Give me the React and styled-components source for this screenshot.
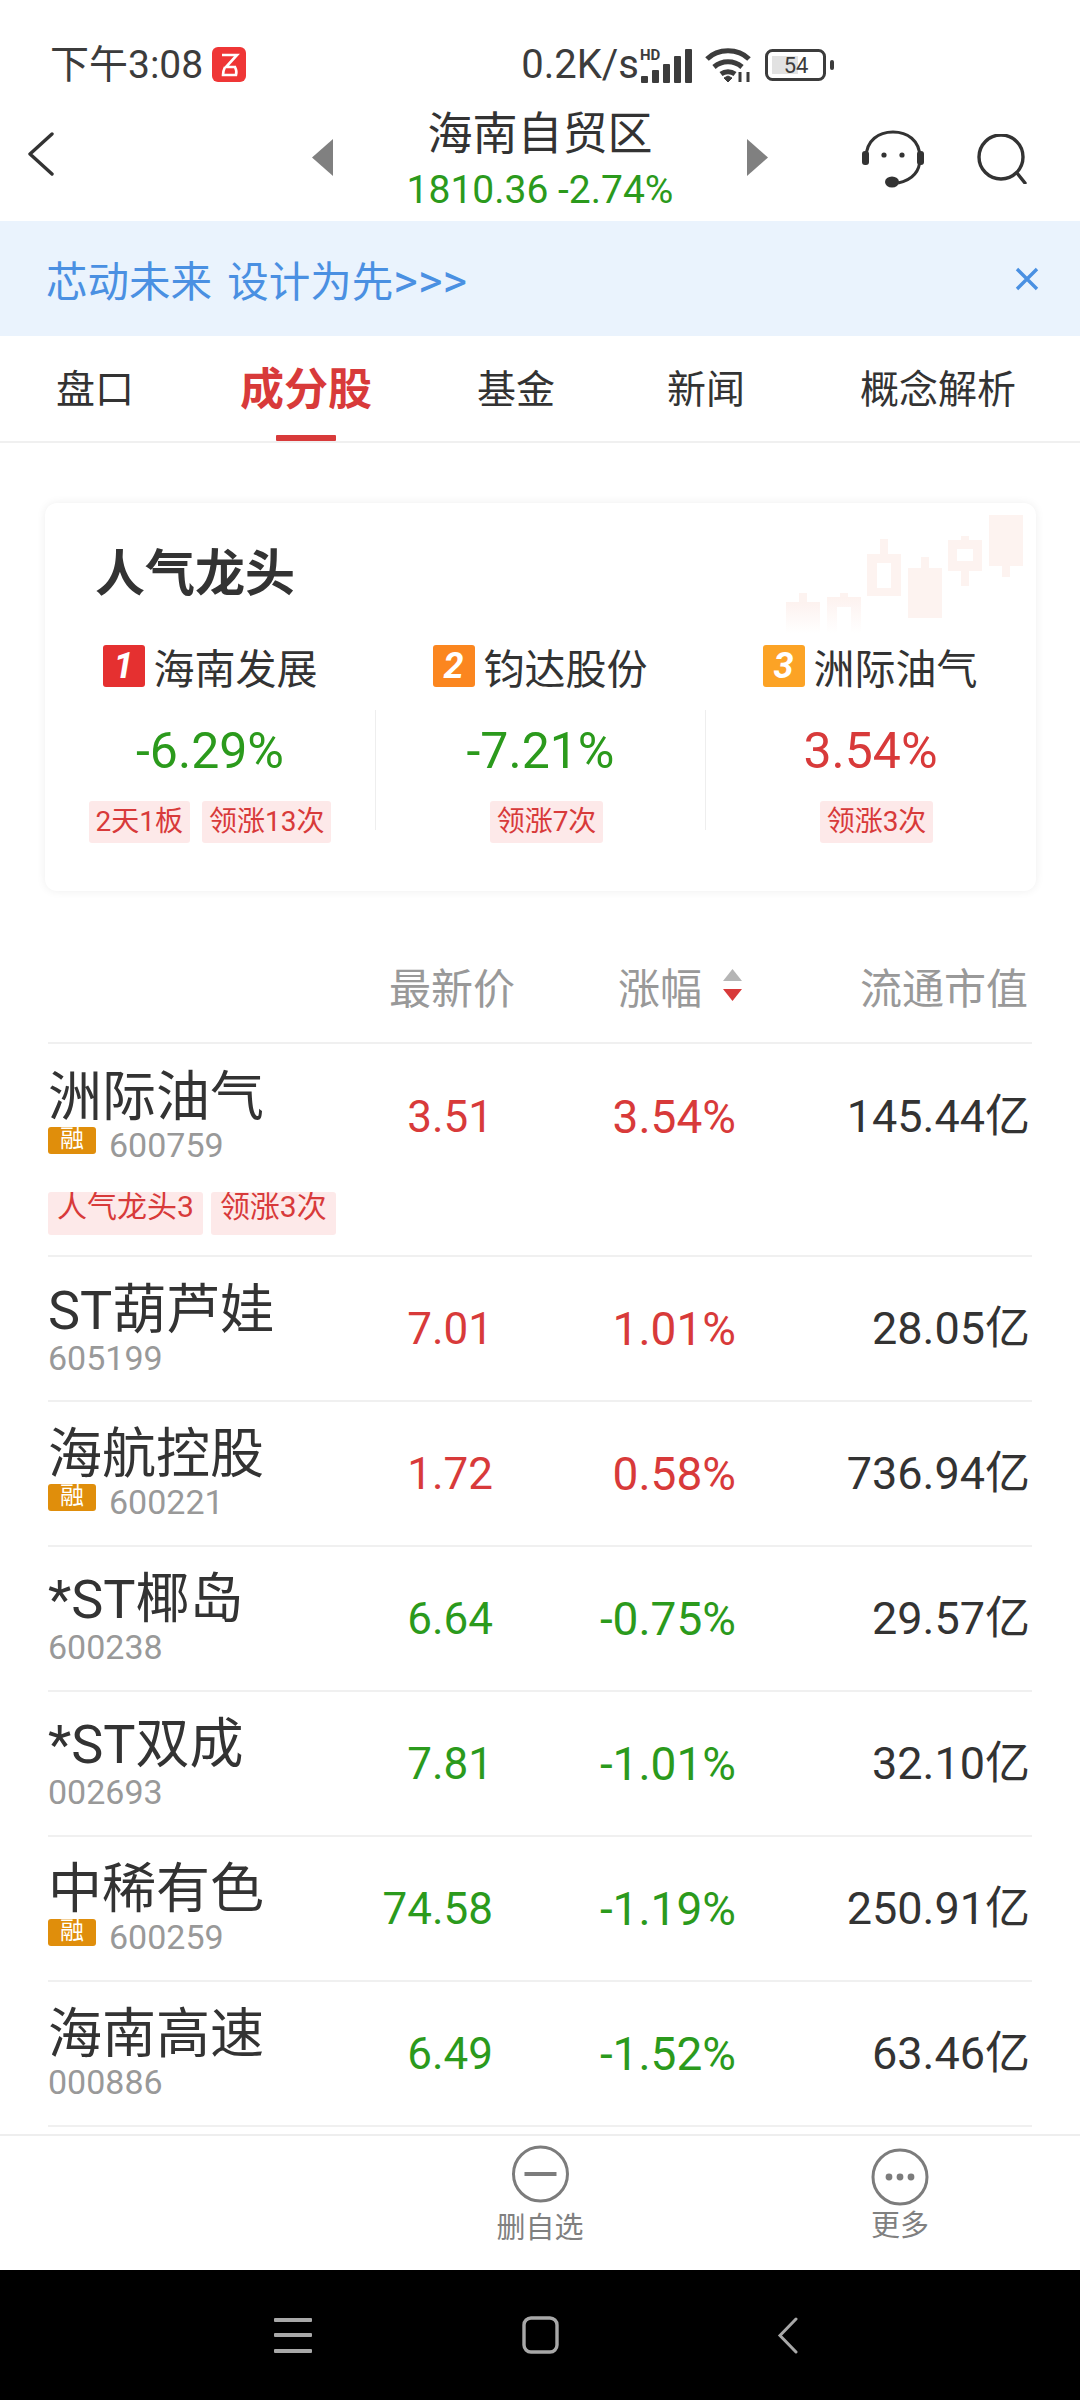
import React from "react";
import styled, { createGlobalStyle } from "styled-components";

const GREEN = "#2b9a1c";
const RED = "#d83a3a";
const FONT = `Roboto, "Noto Sans CJK SC", sans-serif`;

const Global = createGlobalStyle`
  html, body { margin: 0; padding: 0; background: #fff; }
  * { box-sizing: border-box; }
`;

const Screen = styled.div`
  width: 1080px;
  height: 2400px;
  display: flex;
  flex-direction: column;
  overflow: hidden;
  background: #fff;
  color: #333;
  font-family: ${FONT};
`;

/* status bar */
const StatusBar = styled.div`
  height: 96px;
  padding: 33px 245px 0 50px;
  display: flex;
  align-items: center;
  justify-content: space-between;
  flex: none;
`;
const StatusGroup = styled.div`
  display: flex;
  align-items: center;
  gap: ${(p) => p.$gap || 0}px;
  margin-left: ${(p) => p.$left || 0}px;
`;
const StatusText = styled.span`
  font-size: ${(p) => p.$size || 39}px;
  line-height: 44px;
  color: #3c3c3c;
  white-space: nowrap;
`;

/* title bar */
const TitleBar = styled.div`
  height: 125px;
  flex: none;
  display: grid;
  grid-template-columns: 312px 456px 1fr;
  align-items: center;
`;
const BackCell = styled.div`
  padding-left: 27px;
  padding-bottom: 10px;
  display: flex;
`;
const TitleCell = styled.div`
  display: flex;
  align-items: center;
  justify-content: space-between;
`;
const TitleStack = styled.div`
  display: flex;
  flex-direction: column;
  align-items: center;
  margin-top: 3px;
`;
const TitleText = styled.div`
  font-size: 45px;
  line-height: 56px;
  color: #333;
`;
const TitleSub = styled.div`
  font-size: 39px;
  line-height: 46px;
  margin-top: 4px;
  color: ${GREEN};
  white-space: nowrap;
`;
const ActionCell = styled.div`
  display: flex;
  align-items: center;
  padding: 0 0 0 94px;
  gap: 52px;
`;

/* banner */
const Banner = styled.div`
  height: 115px;
  flex: none;
  background: #eaf3fd;
  padding: 0 41px 0 46px;
  display: flex;
  align-items: center;
  justify-content: space-between;
`;
const BannerText = styled.div`
  font-size: 41.5px;
  word-spacing: 5px;
  color: #4a90e2;
  white-space: pre;
`;
const BannerArrows = styled.span`
  font-size: 47px;
`;

/* tabs */
const Tabs = styled.div`
  height: 107px;
  flex: none;
  position: relative;
  display: flex;
  border-bottom: 2px solid #f0f0f0;
`;
const Tab = styled.div`
  position: absolute;
  left: ${(p) => p.$center}px;
  top: 0;
  height: 105px;
  transform: translateX(-50%);
  display: flex;
  align-items: center;
  font-size: ${(p) => (p.$active ? 44 : 39)}px;
  font-weight: ${(p) => (p.$active ? 700 : 400)};
  color: ${(p) => (p.$active ? RED : "#333")};
  white-space: nowrap;
  padding-bottom: 6px;
`;
const TabMark = styled.div`
  position: absolute;
  left: 276px;
  width: 60px;
  bottom: 0;
  height: 6px;
  background: ${RED};
  border-radius: 1px;
`;

/* leader card */
const Card = styled.div`
  position: relative;
  flex: none;
  margin: 60px 44px 0 45px;
  height: 388px;
  border-radius: 12px;
  background: #fff;
  box-shadow: 0 0 10px rgba(0, 0, 0, 0.07);
  overflow: hidden;
`;
const CardTitle = styled.div`
  padding: 40px 0 0 50px;
  height: 138px;
  font-size: 50px;
  line-height: 62px;
  font-weight: 700;
  color: #333;
`;
const LeaderGrid = styled.div`
  display: grid;
  grid-template-columns: repeat(3, 330px);
`;
const Leader = styled.div`
  display: flex;
  flex-direction: column;
  align-items: center;
`;
const LeaderName = styled.div`
  height: 50px;
  display: flex;
  align-items: center;
  gap: 9px;
  font-size: 41px;
  color: #333;
`;
const RankBadge = styled.span`
  width: 42px;
  height: 42px;
  border-radius: 3px;
  background: ${(p) => p.$bg};
  color: #fff;
  font: italic 700 36px/42px Roboto, sans-serif;
  text-align: center;
`;
const LeaderBody = styled.div`
  align-self: stretch;
  height: 120px;
  margin-top: 19px;
  display: flex;
  flex-direction: column;
  align-items: center;
  border-left: ${(p) => (p.$divided ? "1px solid #eeeeee" : "none")};
`;
const LeaderPct = styled.div`
  font-size: 50px;
  line-height: 60px;
  margin-top: 11px;
  color: ${(p) => p.$color};
`;
const TagRow = styled.div`
  display: flex;
  width: max-content;
  gap: ${(p) => p.$gap || 12}px;
  margin-top: ${(p) => p.$top || 0}px;
  padding-left: ${(p) => p.$shift || 0}px;
`;
const Tag = styled.div`
  flex: none;
  height: ${(p) => p.$h || 42}px;
  padding: 0 ${(p) => p.$pad || 7}px;
  border-radius: 3px;
  background: #fde9e9;
  color: ${RED};
  font-size: ${(p) => p.$size || 28}px;
  line-height: ${(p) => p.$line || 42}px;
  white-space: nowrap;
  overflow: hidden;
`;
const CandleArt = styled.svg`
  position: absolute;
  right: 0;
  top: 0;
  pointer-events: none;
`;

/* stock table */
const Table = styled.div`
  flex: 1;
  min-height: 0;
  margin: 0 48px;
`;
const TableHead = styled.div`
  display: grid;
  grid-template-columns: 467px 227px 286px;
  height: 153px;
  padding-top: 66px;
  font-size: 42px;
  color: #999;
  border-bottom: 2px solid #f0f0f0;
`;
const HeadCell = styled.div`
  display: flex;
  align-items: center;
  justify-content: flex-end;
  gap: ${(p) => p.$gap || 0}px;
  height: 56px;
  white-space: nowrap;
`;
const Row = styled.div`
  display: grid;
  grid-template-columns: 250px 195px 243px 294px;
  height: ${(p) => p.$h}px;
  align-items: start;
  border-bottom: 2px solid #f0f0f0;
`;
const NameCell = styled.div`
  display: flex;
  flex-direction: column;
`;
const StockName = styled.div`
  font-size: 54px;
  line-height: 62px;
  margin-top: ${(p) => p.$top}px;
  color: #333;
  white-space: nowrap;
`;
const CodeLine = styled.div`
  display: flex;
  align-items: center;
  gap: 13px;
  height: 40px;
  margin-top: -4px;
`;
const MarginBadge = styled.span`
  width: 48px;
  height: 27px;
  margin-top: -10px;
  border-radius: 3px;
  background: #e08e0b;
  color: #fff;
  font-size: 24px;
  line-height: 24px;
  text-align: center;
  overflow: hidden;
`;
const Code = styled.span`
  font-size: 34px;
  line-height: 40px;
  color: #999;
`;
const Num = styled.div`
  font-size: ${(p) => p.$size}px;
  line-height: 60px;
  margin-top: ${(p) => p.$top}px;
  text-align: right;
  color: ${(p) => p.$color};
  white-space: nowrap;
`;

/* action footer */
const Footer = styled.div`
  height: 136px;
  flex: none;
  border-top: 2px solid #eeeeee;
  position: relative;
  display: flex;
`;
const FooterAction = styled.div`
  position: absolute;
  left: ${(p) => p.$center}px;
  top: ${(p) => p.$top}px;
  transform: translateX(-50%);
  display: flex;
  flex-direction: column;
  align-items: center;
`;
const FooterLabel = styled.div`
  font-size: 29px;
  line-height: 36px;
  margin-top: ${(p) => p.$top}px;
  color: #808080;
  white-space: nowrap;
`;

/* system navigation */
const NavBar = styled.div`
  height: 130px;
  flex: none;
  background: #000;
  position: relative;
`;
const NavIcon = styled.svg`
  position: absolute;
  left: ${(p) => p.$x}px;
  top: ${(p) => p.$y}px;
`;
const NudgedIcon = styled.svg`
  margin-bottom: ${(p) => p.$lift || 0}px;
  flex: none;
`;

const AppBadge = () => (
  <svg width="34" height="35" viewBox="0 0 34 35">
    <rect width="34" height="35" rx="6" fill="#ef3636" />
    <path d="M10 8h15l-11 12h10M13 20c-2 4-2 7-2 8h13c1-3 0-6-1-8" fill="none" stroke="#fff" strokeWidth="2.6" />
  </svg>
);

const Signal = () => (
  <svg width="54" height="36" viewBox="0 0 54 36">
    <text x="1" y="13" fontFamily="Roboto, sans-serif" fontWeight="700" fontSize="15" fill="#3c3c3c">HD</text>
    <rect x="2" y="29" width="7" height="7" rx="1" fill="#3c3c3c" />
    <rect x="13" y="23" width="7" height="13" rx="1" fill="#3c3c3c" />
    <rect x="24" y="17" width="7" height="19" rx="1" fill="#3c3c3c" />
    <rect x="35" y="9" width="7" height="27" rx="1" fill="#3c3c3c" />
    <rect x="46" y="2" width="7" height="34" rx="1" fill="#3c3c3c" />
  </svg>
);

const Wifi = () => (
  <svg width="48" height="36" viewBox="0 0 48 36" fill="none" stroke="#3c3c3c" strokeWidth="5">
    <path d="M2 12C13 1 33 1 44 12" />
    <path d="M9 20c8-7 20-7 28 0" />
    <path d="M16 27c4-3 10-3 14 0" />
    <path d="M19 31l4 4 4-4-4-2z" fill="#3c3c3c" strokeWidth="1" />
    <path d="M35 25v10M43 25v10" strokeWidth="3" />
  </svg>
);

const Battery = () => (
  <svg width="70" height="32" viewBox="0 0 70 32">
    <rect x="1.5" y="1.5" width="58" height="29" rx="6" fill="none" stroke="#3c3c3c" strokeWidth="3" />
    <rect x="7" y="7" width="26" height="18" fill="#e2e2e2" />
    <rect x="65" y="11" width="4" height="10" rx="2" fill="#3c3c3c" />
    <text x="31" y="24" textAnchor="middle" fontFamily="Roboto, sans-serif" fontSize="22" fill="#3c3c3c">54</text>
  </svg>
);

const Chevron = () => (
  <svg width="28" height="44" viewBox="0 0 28 44" fill="none" stroke="#333" strokeWidth="3.4" strokeLinecap="round" strokeLinejoin="round">
    <path d="M25 2L3 22l22 20" />
  </svg>
);

const Triangle = ({ flip }) => (
  <NudgedIcon $lift={2} width="21" height="37" viewBox="0 0 21 37">
    <path d={flip ? "M0 0l21 18.5L0 37z" : "M21 0L0 18.5 21 37z"} fill="#808080" />
  </NudgedIcon>
);

const Headset = () => (
  <svg width="62" height="58" viewBox="0 0 62 58" fill="none" stroke="#333" strokeWidth="3">
    <path d="M4 28C4 10 17 2 31 2s27 8 27 26c0 14-8 22-22 25" />
    <rect x="0" y="21" width="7" height="14" rx="3" fill="#333" stroke="none" />
    <rect x="55" y="21" width="7" height="14" rx="3" fill="#333" stroke="none" />
    <circle cx="22" cy="25" r="2.6" fill="#333" stroke="none" />
    <circle cx="40" cy="25" r="2.6" fill="#333" stroke="none" />
    <ellipse cx="30" cy="52" rx="7" ry="5.5" fill="#333" stroke="none" />
  </svg>
);

const Search = () => (
  <svg width="52" height="50" viewBox="0 0 52 50" fill="none" stroke="#333" strokeWidth="3.4" strokeLinecap="round">
    <circle cx="25" cy="23" r="22" />
    <path d="M41 39l8 10" />
  </svg>
);

const Close = () => (
  <svg width="24" height="24" viewBox="0 0 24 24" stroke="#4a90e2" strokeWidth="3.4">
    <path d="M2 2l20 20M22 2L2 22" />
  </svg>
);

const SortArrows = () => (
  <svg width="19" height="32" viewBox="0 0 19 32">
    <path d="M9.5 0L19 12H0z" fill="#b5b5b5" />
    <path d="M0 20h19L9.5 32z" fill={RED} />
  </svg>
);

const CircleMinus = () => (
  <svg width="58" height="58" viewBox="0 0 58 58" fill="none" stroke="#7c7c7c" strokeWidth="3">
    <circle cx="29" cy="29" r="27" />
    <path d="M13 29h32" strokeWidth="4" />
  </svg>
);

const CircleMore = () => (
  <svg width="58" height="58" viewBox="0 0 58 58" fill="none" stroke="#7c7c7c" strokeWidth="3">
    <circle cx="29" cy="29" r="27" />
    <circle cx="18" cy="29" r="3.4" fill="#7c7c7c" stroke="none" />
    <circle cx="29" cy="29" r="3.4" fill="#7c7c7c" stroke="none" />
    <circle cx="40" cy="29" r="3.4" fill="#7c7c7c" stroke="none" />
  </svg>
);

// Faded candlestick decoration in the card's upper right corner
const Candles = () => (
  <CandleArt width="260" height="130" viewBox="775 502 260 130">
    <defs>
      <linearGradient id="fade" x1="0" y1="0" x2="0" y2="1">
        <stop offset="0" stopColor="#fdf2ef" />
        <stop offset="1" stopColor="#fff" />
      </linearGradient>
    </defs>
    <g fill="#fdf3f0">
      <rect x="988" y="514" width="34" height="51" />
      <rect x="1001" y="565" width="8" height="11" />
      <path fillRule="evenodd" d="M947 539h34v31h-34zM956 548v12h16v-12z" />
      <rect x="960" y="535" width="8" height="4" />
      <rect x="960" y="570" width="8" height="15" />
      <rect x="907" y="567" width="34" height="50" />
      <rect x="920" y="556" width="8" height="11" />
      <path fillRule="evenodd" d="M866 553h34v42h-34zM876 562v25h14v-25z" />
      <rect x="879" y="538" width="8" height="15" />
      <rect x="839" y="592" width="8" height="10" />
      <rect x="798" y="592" width="8" height="10" />
    </g>
    <path fillRule="evenodd" d="M826 596h34v36h-34zM836 606v26h14v-26z" fill="url(#fade)" />
    <rect x="785" y="601" width="34" height="31" fill="url(#fade)" />
  </CandleArt>
);

const leaders = [
  { rank: 1, bg: "#e53030", name: "海南发展", pct: "-6.29%", color: GREEN, tags: ["2天1板", "领涨13次"] },
  { rank: 2, bg: "#fb861f", name: "钧达股份", pct: "-7.21%", color: GREEN, tags: ["领涨7次"], shift: 12, divided: true },
  { rank: 3, bg: "#fca325", name: "洲际油气", pct: "3.54%", color: RED, tags: ["领涨3次"], shift: 12, divided: true },
];

const stocks = [
  { name: "洲际油气", code: "600759", margin: true, price: "3.51", pct: "3.54%", cap: "145.44亿", up: true, h: 213, nameTop: 23, numTop: 43, tags: ["人气龙头3", "领涨3次"] },
  { name: "ST葫芦娃", code: "605199", price: "7.01", pct: "1.01%", cap: "28.05亿", up: true, h: 145, nameTop: 23, numTop: 42 },
  { name: "海航控股", code: "600221", margin: true, price: "1.72", pct: "0.58%", cap: "736.94亿", up: true, h: 145, nameTop: 22, numTop: 42 },
  { name: "*ST椰岛", code: "600238", price: "6.64", pct: "-0.75%", cap: "29.57亿", h: 145, nameTop: 22, numTop: 42 },
  { name: "*ST双成", code: "002693", price: "7.81", pct: "-1.01%", cap: "32.10亿", h: 145, nameTop: 22, numTop: 42 },
  { name: "中稀有色", code: "600259", margin: true, price: "74.58", pct: "-1.19%", cap: "250.91亿", h: 145, nameTop: 22, numTop: 42 },
  { name: "海南高速", code: "000886", price: "6.49", pct: "-1.52%", cap: "63.46亿", h: 145, nameTop: 22, numTop: 42 },
];

const tabs = [
  { label: "盘口", center: 95 },
  { label: "成分股", center: 306, active: true },
  { label: "基金", center: 516 },
  { label: "新闻", center: 706 },
  { label: "概念解析", center: 938 },
];

export default function App() {
  return (
    <Screen>
      <Global />
      <StatusBar>
        <StatusGroup $gap={9}>
          <StatusText>下午3:08</StatusText>
          <AppBadge />
        </StatusGroup>
        <StatusGroup>
          <StatusText $size={40}>0.2K/s</StatusText>
          <Signal />
          <StatusGroup $gap={12} $left={12}>
            <Wifi />
            <Battery />
          </StatusGroup>
        </StatusGroup>
      </StatusBar>

      <TitleBar>
        <BackCell><Chevron /></BackCell>
        <TitleCell>
          <Triangle />
          <TitleStack>
            <TitleText>海南自贸区</TitleText>
            <TitleSub>1810.36 -2.74%</TitleSub>
          </TitleStack>
          <Triangle flip />
        </TitleCell>
        <ActionCell>
          <Headset />
          <Search />
        </ActionCell>
      </TitleBar>

      <Banner>
        <BannerText>芯动未来 设计为先<BannerArrows>&gt;&gt;&gt;</BannerArrows></BannerText>
        <Close />
      </Banner>

      <Tabs>
        {tabs.map((t) => (
          <Tab key={t.label} $center={t.center} $active={t.active}>{t.label}</Tab>
        ))}
        <TabMark />
      </Tabs>

      <Card>
        <Candles />
        <CardTitle>人气龙头</CardTitle>
        <LeaderGrid>
          {leaders.map((l) => (
            <Leader key={l.rank}>
              <LeaderName>
                <RankBadge $bg={l.bg}>{l.rank}</RankBadge>
                {l.name}
              </LeaderName>
              <LeaderBody $divided={l.divided}>
                <LeaderPct $color={l.color}>{l.pct}</LeaderPct>
                <TagRow $top={20} $shift={l.shift}>
                  {l.tags.map((t) => <Tag key={t}>{t}</Tag>)}
                </TagRow>
              </LeaderBody>
            </Leader>
          ))}
        </LeaderGrid>
      </Card>

      <Table>
        <TableHead>
          <HeadCell>最新价</HeadCell>
          <HeadCell $gap={21}>涨幅<SortArrows /></HeadCell>
          <HeadCell>流通市值</HeadCell>
        </TableHead>
        {stocks.map((s) => {
          const color = s.up ? RED : GREEN;
          return (
            <Row key={s.code} $h={s.h}>
              <NameCell>
                <StockName $top={s.nameTop}>{s.name}</StockName>
                <CodeLine>
                  {s.margin && <MarginBadge>融</MarginBadge>}
                  <Code>{s.code}</Code>
                </CodeLine>
                {s.tags && (
                  <TagRow $gap={8} $top={27}>
                    {s.tags.map((t) => <Tag key={t} $h={43} $line={30} $pad={9} $size={30}>{t}</Tag>)}
                  </TagRow>
                )}
              </NameCell>
              <Num $top={s.numTop} $size={44} $color={color}>{s.price}</Num>
              <Num $top={s.numTop} $size={46} $color={color}>{s.pct}</Num>
              <Num $top={s.numTop} $size={45} $color="#333">{s.cap}</Num>
            </Row>
          );
        })}
      </Table>

      <Footer>
        <FooterAction $center={540} $top={9}>
          <CircleMinus />
          <FooterLabel $top={7}>删自选</FooterLabel>
        </FooterAction>
        <FooterAction $center={900} $top={12}>
          <CircleMore />
          <FooterLabel $top={2}>更多</FooterLabel>
        </FooterAction>
      </Footer>

      <NavBar>
        <NavIcon $x={274} $y={48} width="38" height="36" viewBox="0 0 38 36" fill="#a8a8a8">
          <rect y="0" width="38" height="4" rx="1" />
          <rect y="15" width="38" height="4" rx="1" />
          <rect y="31" width="38" height="4" rx="1" />
        </NavIcon>
        <NavIcon $x={522} $y={46} width="37" height="38" viewBox="0 0 37 38" fill="none" stroke="#a8a8a8" strokeWidth="3.4">
          <rect x="2" y="2" width="33" height="34" rx="7" />
        </NavIcon>
        <NavIcon $x={777} $y={47} width="21" height="37" viewBox="0 0 21 37" fill="none" stroke="#a8a8a8" strokeWidth="3" strokeLinecap="round">
          <path d="M19 2L3 18.5 19 35" />
        </NavIcon>
      </NavBar>
    </Screen>
  );
}
